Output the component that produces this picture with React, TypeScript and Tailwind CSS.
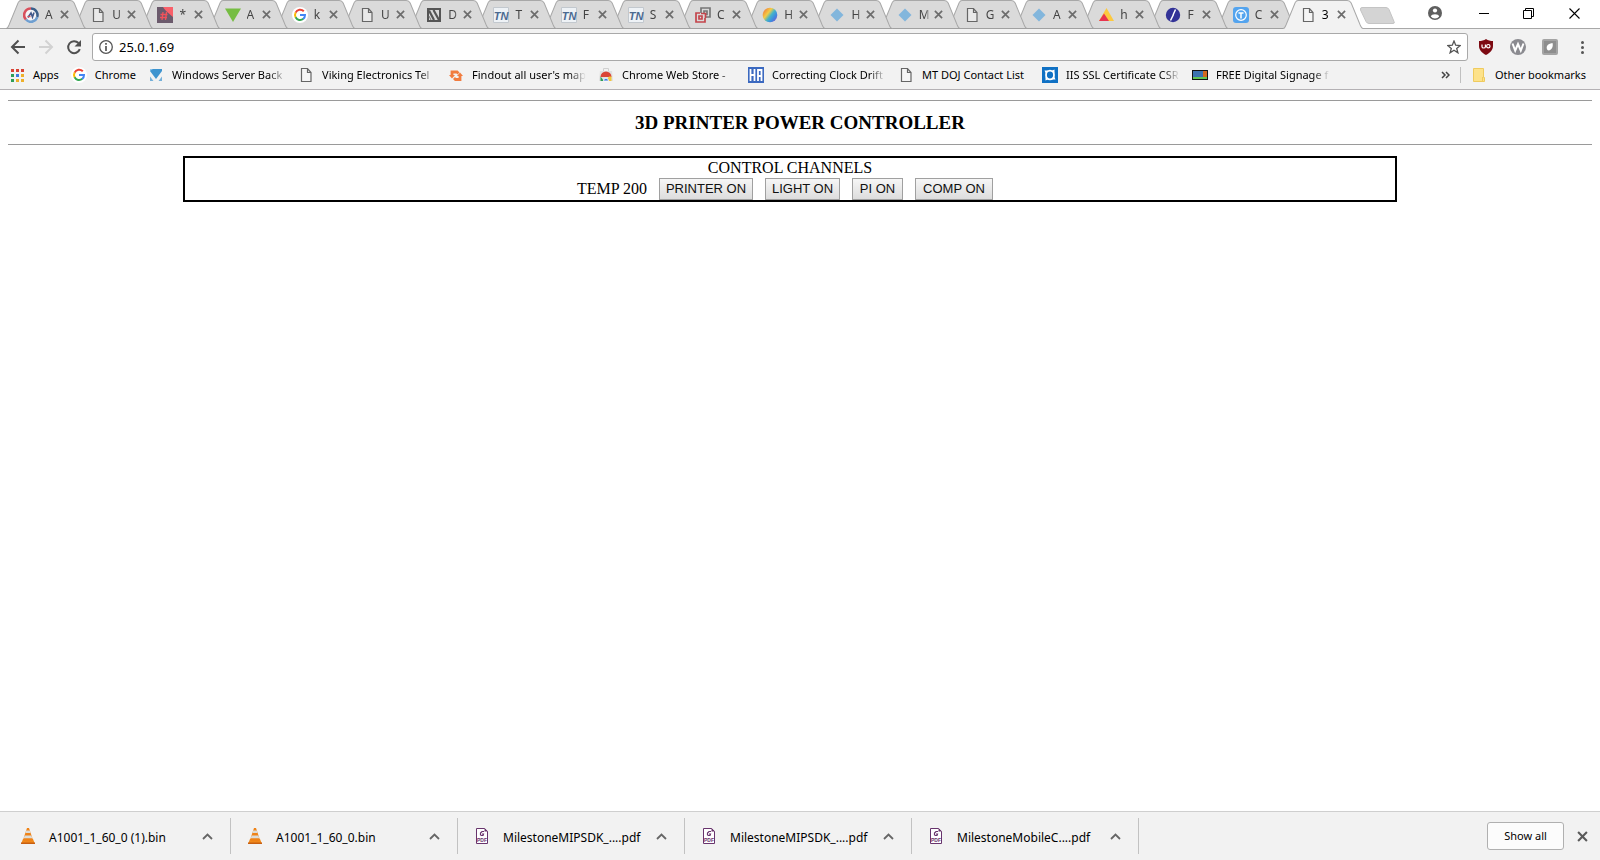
import type { ReactNode } from 'react'

type IconName =
  | 'ring'
  | 'page'
  | 'hash'
  | 'triangle'
  | 'google'
  | 'stripes'
  | 'tn'
  | 'squares'
  | 'rainbow'
  | 'diamond'
  | 'peaks'
  | 'slash'
  | 'circleT'
  | 'apps'
  | 'windows'
  | 'arrows'
  | 'store'
  | 'ha'
  | 'iis'
  | 'signage'
  | 'folder'
  | 'cone'
  | 'pdf'

interface Tab {
  icon: IconName
  title: string
}

interface LinkItem {
  icon: IconName
  label: string
  style?: string
}

const FADED = 'w-[114px] [mask-image:linear-gradient(to_right,black_85%,transparent)]'

const TABS: Tab[] = [
  { icon: 'ring', title: 'A' },
  { icon: 'page', title: 'U' },
  { icon: 'hash', title: '*' },
  { icon: 'triangle', title: 'A' },
  { icon: 'google', title: 'k' },
  { icon: 'page', title: 'U' },
  { icon: 'stripes', title: 'D' },
  { icon: 'tn', title: 'T' },
  { icon: 'tn', title: 'F' },
  { icon: 'tn', title: 'S' },
  { icon: 'squares', title: 'C' },
  { icon: 'rainbow', title: 'H' },
  { icon: 'diamond', title: 'H' },
  { icon: 'diamond', title: 'M' },
  { icon: 'page', title: 'G' },
  { icon: 'diamond', title: 'A' },
  { icon: 'peaks', title: 'h' },
  { icon: 'slash', title: 'F' },
  { icon: 'circleT', title: 'C' },
  { icon: 'page', title: '3' }
]

const BOOKMARKS: LinkItem[] = [
  { icon: 'apps', label: 'Apps' },
  { icon: 'google', label: 'Chrome' },
  { icon: 'windows', label: 'Windows Server Back', style: FADED },
  { icon: 'page', label: 'Viking Electronics Tel', style: FADED },
  { icon: 'arrows', label: "Findout all user's map", style: FADED },
  { icon: 'store', label: 'Chrome Web Store - ', style: FADED },
  { icon: 'ha', label: 'Correcting Clock Drift', style: FADED },
  { icon: 'page', label: 'MT DOJ Contact List', style: 'w-[108px]' },
  { icon: 'iis', label: 'IIS SSL Certificate CSR', style: FADED },
  { icon: 'signage', label: 'FREE Digital Signage f', style: FADED }
]

const DOWNLOADS: LinkItem[] = [
  { icon: 'cone', label: 'A1001_1_60_0 (1).bin' },
  { icon: 'cone', label: 'A1001_1_60_0.bin' },
  { icon: 'pdf', label: 'MilestoneMIPSDK_....pdf' },
  { icon: 'pdf', label: 'MilestoneMIPSDK_....pdf' },
  { icon: 'pdf', label: 'MilestoneMobileC....pdf' }
]

const CHANNELS = [
  { label: 'PRINTER ON', width: 'w-[94px]' },
  { label: 'LIGHT ON', width: 'w-[75px]' },
  { label: 'PI ON', width: 'w-[51px]' },
  { label: 'COMP ON', width: 'w-[78px]' }
]

const ICONS: Record<IconName, ReactNode> = {
  ring: (
    <>
      <circle cx="8" cy="8" r="8" fill="#f4f4f6" />
      <path d="M3 12.500A6.500 6.500 0 0 1 8 1.500" fill="none" stroke="#d8505c" strokeWidth="2.600" />
      <path d="M8 1.500a6.500 6.500 0 0 1 6.200 8.500" fill="none" stroke="#3c5f88" strokeWidth="2.600" />
      <path d="M14.200 10A6.500 6.500 0 0 1 3 12.500" fill="none" stroke="#6f9fd0" strokeWidth="2.600" />
      <path d="M5 10.500 8 6l1.500 4L11 5.500" fill="none" stroke="#41598a" strokeWidth="1.600" />
      <path d="M4.500 9.500h3" stroke="#d8505c" strokeWidth="1.400" />
    </>
  ),
  page: (
    <path
      d="M3.500 1.500h6l3.500 4v9H3.500zM9.500 1.500v4H13"
      fill="#f8f8f8"
      fillOpacity="0.5"
      stroke="#666"
      strokeWidth="1.200"
    />
  ),
  hash: (
    <>
      <path d="M0 0h16v16H0z" fill="#6b5a6c" />
      <path d="M6 0h10v10C13 7 9 5 6 0z" fill="#f9606a" />
      <path d="M6 5 5 13M9.500 5l-1 8M3.500 7.500h7M3 10.500h7" stroke="#f2525b" strokeWidth="1.300" fill="none" />
    </>
  ),
  triangle: <path d="M0 1.500h16L8 15z" fill="#76bd43" />,
  google: (
    <>
      <circle cx="8" cy="8" r="8" fill="#fff" />
      <path d="M11.800 4.300A5 5 0 0 0 3.600 5.700" fill="none" stroke="#ea4335" strokeWidth="2" />
      <path d="M3.700 5.500a5 5 0 0 0 0 5" fill="none" stroke="#fbbc05" strokeWidth="2" />
      <path d="M3.600 10.300a5 5 0 0 0 7.700 1.500" fill="none" stroke="#34a853" strokeWidth="2" />
      <path d="M11.200 11.900A5 5 0 0 0 13 8H8" fill="none" stroke="#4285f4" strokeWidth="2" />
    </>
  ),
  stripes: (
    <>
      <path d="M2 2h12v12H2z" fill="#dadada" stroke="#555" strokeWidth="2" />
      <path d="M3 3.500 8 13M7.500 3l5.500 10" stroke="#555" strokeWidth="2.200" fill="none" />
      <path d="M3 9l2 4" stroke="#777" strokeWidth="1" fill="none" />
    </>
  ),
  tn: (
    <>
      <path d="M.500.500h15v15H.500z" fill="#eef2f6" stroke="#c2c8ce" />
      <text x="8" y="13" textAnchor="middle" fontSize="11" fontWeight="700" fontStyle="italic" fontFamily="Liberation Sans, sans-serif" fill="#4c6a90">
        TN
      </text>
    </>
  ),
  squares: (
    <g fill="none" strokeWidth="1.700">
      <path d="M6 6V1h9v9h-4" stroke="#777" />
      <path d="M9 6V4h3v3.500h-2" stroke="#777" />
      <path d="M5 6H1v9h9v-4" stroke="#c4454c" />
      <path d="M4 9v3h3V9zM6 6.500h4.500V11" stroke="#c4454c" />
    </g>
  ),
  rainbow: (
    <>
      <defs>
        <linearGradient id="rainbow" x1="0" y1="0.1" x2="1" y2="0.9">
          <stop offset="0.1" stopColor="#f08a3c" />
          <stop offset="0.35" stopColor="#f5cc45" />
          <stop offset="0.55" stopColor="#45b4c8" />
          <stop offset="0.75" stopColor="#3d8be0" />
          <stop offset="0.95" stopColor="#7a5cc8" />
        </linearGradient>
      </defs>
      <circle cx="8" cy="8" r="7.300" fill="url(#rainbow)" />
    </>
  ),
  diamond: <path d="M8 1.500 14.500 8 8 14.500 1.500 8z" fill="#82b6dc" />,
  peaks: (
    <>
      <path d="M8.500 1 16 14H1z" fill="#fcc93f" />
      <path d="M6 6.500 11 14H1z" fill="#e8344f" />
    </>
  ),
  slash: (
    <>
      <circle cx="8" cy="8" r="7.200" fill="#333397" />
      <path d="M10.500 2.500 8 8M8.500 7.500 5.500 13.500" stroke="#fff" strokeWidth="1.500" />
    </>
  ),
  circleT: (
    <>
      <rect width="16" height="16" rx="3" fill="#54a4ee" />
      <circle cx="8" cy="8" r="5.300" fill="none" stroke="#fff" strokeWidth="1.200" />
      <path d="M5.500 6h5M8 6v5.500" stroke="#fff" strokeWidth="1.500" />
    </>
  ),
  apps: (
    <>
      <path d="M2 2h3v3H2zM7 2h3v3H7zM12 2h3v3h-3z" fill="#d94335" />
      <path d="M2 7h3v3H2zM2 12h3v3H2z" fill="#2f9e58" />
      <path d="M7 7h3v3H7z" fill="#3f7be0" />
      <path d="M12 7h3v3h-3zM12 12h3v3h-3zM7 12h3v3H7z" fill="#eeb02a" />
    </>
  ),
  windows: (
    <>
      <path d="M2 2h12v2L8 12 2 4z" fill="#3e94cf" />
      <path d="M2 9.500 5.500 14H2zM14 9.500 10.500 14H14z" fill="#3e94cf" fillOpacity="0.7" />
      <path d="M2 2h3l-3 2z" fill="#8cc4ea" />
    </>
  ),
  arrows: (
    <g fill="none" stroke="#f17c3f" strokeWidth="2.800">
      <path d="M4 9V5h5l1.500 1.500" />
      <path d="M12 8v4.500H7.500L6 11" />
      <path d="M1 8h6l-3 3.500zM9 9h6l-3-3.500z" fill="#f17c3f" stroke="none" />
    </g>
  ),
  store: (
    <>
      <path d="M2 4h12l1 10H1z" fill="#e0e0e0" />
      <path d="M5.500 4V1.500h5V4" fill="none" stroke="#d0d0d0" />
      <path d="M2.500 10a5.500 5.500 0 0 1 11 0z" fill="#da4436" />
      <path d="M2.500 9.500 6 14H2.500z" fill="#2f9e58" />
      <path d="M13.500 9.500V14H8l3-4.500z" fill="#f4c63a" />
      <path d="M5.500 14a2.500 2.800 0 0 1 5 0z" fill="#3f7be0" stroke="#fff" strokeWidth="0.800" />
    </>
  ),
  ha: (
    <>
      <path d="M0 0h16v16H0z" fill="#3b69c0" />
      <path d="M2.500 2v12M6.500 2v12M2.500 8h4M10 14V3h3.500v11M10 9h3.500" fill="none" stroke="#fff" strokeWidth="1.800" />
    </>
  ),
  iis: (
    <>
      <path d="M0 0h16v16H0z" fill="#1071c4" />
      <ellipse cx="8" cy="8" rx="4" ry="4.300" fill="none" stroke="#fff" strokeWidth="1.800" />
      <path d="M2.500 3.500h4L4 7zM13.500 12.500h-4L12 9zM12.500 2.500v4L9 4zM3.500 13.500v-4L7 12z" fill="#fff" />
    </>
  ),
  signage: (
    <>
      <path d="M0 3h16v10H0z" fill="#111" />
      <path d="M1 4h10v6H1z" fill="#3c72b0" />
      <path d="M11 4h4v6h-4z" fill="#d2691e" />
      <path d="M1 10h14v2H1z" fill="#62c554" />
    </>
  ),
  folder: (
    <>
      <path d="M2.500 1.500h10v9h1v4h-11z" fill="#fde28a" stroke="#efcb5e" />
      <path d="M11.500 14v-4" stroke="#efcb5e" />
    </>
  ),
  cone: (
    <>
      <path d="M3 11h10l2 5H1z" fill="#f08a1c" />
      <path d="M1 14.500h14V16H1z" fill="#c85f10" />
      <path d="M7 0h2l4 12c-2 2-8 2-10 0z" fill="#ef8318" />
      <path d="M6.200 2.500h3.600l.8 2.500H5.400zM4.600 7.500h6.800l.8 2.700H3.800z" fill="#dcdcd8" />
    </>
  ),
  pdf: (
    <>
      <path d="M2.500.500h8l3 3v12h-11z" fill="#fff" stroke="#68346d" />
      <path d="M10.500 0v3.500H14z" fill="#68346d" />
      <path d="M10 3.500H8L6.500 5v2l1 .500H9L9.500 6H8" fill="none" stroke="#68346d" strokeWidth="1.200" />
      <text x="8" y="14" textAnchor="middle" fontSize="5" fontWeight="700" fontFamily="Liberation Sans, sans-serif" fill="#68346d">
        PDF
      </text>
    </>
  )
}

function Icon({ name }: { name: IconName }) {
  return (
    <svg className="h-4 w-4 shrink-0" viewBox="0 0 16 16" aria-hidden="true">
      {ICONS[name]}
    </svg>
  )
}

function Cross({ className }: { className: string }) {
  return (
    <svg className={className} viewBox="0 0 10 10" aria-hidden="true">
      <path d="M1 1l8 8M9 1 1 9" fill="none" stroke="currentColor" strokeWidth="1.900" />
    </svg>
  )
}

function BrowserTab({ tab, active, zIndex }: { tab: Tab; active: boolean; zIndex: number }) {
  return (
    <div className="relative -mr-[13px] flex h-[29px] min-w-0 flex-1 items-center pl-[17px]" style={{ zIndex }}>
      <svg className="absolute inset-0 h-full w-full" viewBox="0 0 80 29" preserveAspectRatio="none" aria-hidden="true">
        <path
          d="M0 29V28.500C2 28.500 2 27 3 25L12 3C13 1 13 .500 15 .500H64C66 .500 67 1 68 3L77 25C78 27 78 28.500 80 28.500V29z"
          fill={active ? '#f2f2f2' : '#dadada'}
        />
        <path
          d="M0 28.500C2 28.500 2 27 3 25L12 3C13 1 13 .500 15 .500H64C66 .500 67 1 68 3L77 25C78 27 78 28.500 80 28.500"
          fill="none"
          stroke="#a8a8a8"
        />
        {!active && <path d="M0 28.500H80" stroke="#a0a0a0" />}
      </svg>
      <button type="button" className="relative flex items-center">
        <Icon name={tab.icon} />
        <span
          className={`ml-1.5 block w-[11px] text-left text-xs [mask-image:linear-gradient(to_right,black_60%,transparent)] ${
            active ? 'text-black' : 'text-[#444]'
          }`}
        >
          {tab.title}
        </span>
      </button>
      <button type="button" aria-label="Close tab" className="relative ml-1 text-[#6c6c6c]">
        <Cross className="h-[9px] w-[9px]" />
      </button>
    </div>
  )
}

function TabStrip() {
  return (
    <div className="flex h-[29px] border-b border-[#a8a8a8] bg-white pl-1.5">
      <div className="flex min-w-0 max-w-[1357px] flex-1 pr-[13px]">
        {TABS.map((tab, i) => {
          const active = i === TABS.length - 1
          return <BrowserTab key={i} tab={tab} active={active} zIndex={active ? 40 : TABS.length - i} />
        })}
      </div>
      <button type="button" aria-label="New tab" className="-ml-1 mt-1.5 h-[18px] w-9">
        <svg className="h-full w-full" viewBox="0 0 36 18" aria-hidden="true">
          <path d="M3 1.500h24q2 0 3 2l5 12q1 2-1 2H10q-2 0-3-2L1.500 4Q1 1.500 3 1.500z" fill="#d4d4d4" stroke="#c4c4c4" />
        </svg>
      </button>
      <div className="ml-auto flex h-[26px] items-center">
        <button type="button" aria-label="Profile" className="flex w-[49px] justify-center">
          <svg className="h-[14px] w-[14px]" viewBox="0 0 14 14" aria-hidden="true">
            <circle cx="7" cy="7" r="7" fill="#5f5f5f" />
            <circle cx="7" cy="4.500" r="2.100" fill="#fff" />
            <path d="M2.800 10.500a4.300 2.800 0 0 1 8.400 0 5.300 5.300 0 0 1-8.400 0z" fill="#fff" />
          </svg>
        </button>
        <button type="button" aria-label="Minimize" className="flex w-[49px] justify-center">
          <span className="h-px w-[10px] bg-black" />
        </button>
        <button type="button" aria-label="Restore" className="flex w-[41px] justify-center">
          <svg className="h-[11px] w-[11px]" viewBox="0 0 11 11" fill="none" stroke="#000" aria-hidden="true">
            <path d="M.500 2.500h8v8h-8zM2.500 2.500v-2h8v8h-2" />
          </svg>
        </button>
        <button type="button" aria-label="Close" className="flex w-[51px] justify-center">
          <svg className="h-[11px] w-[11px]" viewBox="0 0 11 11" stroke="#000" strokeWidth="1.100" aria-hidden="true">
            <path d="M.500.500l10 10M10.500.500l-10 10" />
          </svg>
        </button>
      </div>
    </div>
  )
}

function Toolbar() {
  return (
    <div className="flex h-9 items-center pl-2.5">
      <button type="button" aria-label="Back" className="text-[#505050]">
        <svg className="h-4 w-4" viewBox="0 0 16 16" fill="none" stroke="currentColor" strokeWidth="2" aria-hidden="true">
          <path d="M15 8H2.500M8.500 1.500 2 8l6.500 6.500" />
        </svg>
      </button>
      <button type="button" aria-label="Forward" disabled className="ml-3 text-[#d2d2d2]">
        <svg className="h-4 w-4" viewBox="0 0 16 16" fill="none" stroke="currentColor" strokeWidth="2" aria-hidden="true">
          <path d="M1 8h12.500M7.500 1.500 14 8l-6.500 6.500" />
        </svg>
      </button>
      <button type="button" aria-label="Reload" className="ml-3 text-[#505050]">
        <svg className="h-4 w-4" viewBox="0 0 16 16" aria-hidden="true">
          <path d="M13.800 10.200A6 6 0 1 1 12.500 4" fill="none" stroke="currentColor" strokeWidth="2" />
          <path d="M15 1v6.500H8.500z" fill="currentColor" />
        </svg>
      </button>
      <div className="ml-2.5 flex h-7 flex-1 items-center rounded-[3px] border border-[#a9a9a9] bg-white pr-1.5 pl-1.5">
        <svg className="h-[14px] w-[14px] shrink-0" viewBox="0 0 14 14" aria-hidden="true">
          <circle cx="7" cy="7" r="6.300" fill="none" stroke="#555" strokeWidth="1.300" />
          <path d="M7 3v1.700M7 6v5" stroke="#555" strokeWidth="1.700" />
        </svg>
        <input
          type="text"
          aria-label="Address"
          defaultValue="25.0.1.69"
          className="ml-1.5 min-w-0 flex-1 bg-transparent text-[13px] leading-5 text-black outline-none"
        />
        <button type="button" aria-label="Bookmark this page">
          <svg className="h-[14px] w-[14px]" viewBox="0 0 14 14" fill="none" stroke="#555" strokeWidth="1.300" aria-hidden="true">
            <path d="M7 1l1.700 4.200 4.500.300-3.500 2.900 1.200 4.400L7 10.300l-3.900 2.500 1.200-4.400L.800 5.500l4.500-.300z" />
          </svg>
        </button>
      </div>
      <div className="flex items-center gap-4 pr-2.5 pl-2.5">
        <button type="button" aria-label="uBlock Origin">
          <svg className="h-4 w-4" viewBox="0 0 16 16" aria-hidden="true">
            <path d="M8 0c2 1.500 4.500 2 7 2v5c0 4-3 7-7 9-4-2-7-5-7-9V2c2.500 0 5-.500 7-2z" fill="#7d0a12" />
            <path d="M4 5.500v2.200q0 1.300 1.700 1.300T7.400 7.700V5.500" fill="none" stroke="#fff" strokeWidth="1.200" />
            <circle cx="10.300" cy="7.200" r="1.700" fill="none" stroke="#fff" strokeWidth="1.200" />
          </svg>
        </button>
        <button type="button" aria-label="W extension">
          <svg className="h-4 w-4" viewBox="0 0 16 16" aria-hidden="true">
            <circle cx="8" cy="8" r="8" fill="#8b8b90" />
            <path d="M2.500 4.500 5.200 11.500 8 5l2.800 6.500L13.500 4.500" fill="none" stroke="#fff" strokeWidth="2" />
          </svg>
        </button>
        <button type="button" aria-label="Leaf extension">
          <svg className="h-4 w-4" viewBox="0 0 16 16" aria-hidden="true">
            <rect width="16" height="16" rx="2" fill="#a4a4a4" />
            <path d="M2 2h12v12H2z" fill="#8e8e8e" />
            <path d="M5.500 11C3.500 8 5 5 10.500 4c1 3-.500 7-4 7.500z" fill="#fff" />
          </svg>
        </button>
        <button type="button" aria-label="Menu" className="flex w-4 flex-col items-center gap-0.5">
          <span className="h-[3px] w-[3px] rounded-full bg-[#555]" />
          <span className="h-[3px] w-[3px] rounded-full bg-[#555]" />
          <span className="h-[3px] w-[3px] rounded-full bg-[#555]" />
        </button>
      </div>
    </div>
  )
}

function BookmarksBar() {
  return (
    <nav aria-label="Bookmarks" className="flex h-[25px] items-center border-b border-[#b4b1b4] pb-1 pl-[9px] text-[11px] text-black">
      {BOOKMARKS.map((bookmark) => (
        <a key={bookmark.label} href="#" className="flex shrink-0 items-center gap-2 pr-3">
          <Icon name={bookmark.icon} />
          <span className={`whitespace-nowrap ${bookmark.style ?? ''}`}>{bookmark.label}</span>
        </a>
      ))}
      <button type="button" aria-label="More bookmarks" className="ml-auto">
        <svg className="h-2 w-[9px]" viewBox="0 0 9 8" fill="none" stroke="#444" strokeWidth="1.500" aria-hidden="true">
          <path d="M1 1l3 3-3 3M5 1l3 3-3 3" />
        </svg>
      </button>
      <span className="ml-2.5 h-4 w-px bg-[#c0c0c0]" />
      <button type="button" className="ml-2.5 flex items-center gap-2 pr-[14px]">
        <Icon name="folder" />
        Other bookmarks
      </button>
    </nav>
  )
}

function ControllerPage() {
  return (
    <main className="flex-1 bg-white px-2 pt-2.5 font-['Liberation_Serif','Times_New_Roman',serif] text-base text-black">
      <hr className="border-t border-[#9a9a9a]" />
      <h1 className="py-2.5 text-center text-[19px] leading-[23px] font-bold">3D PRINTER POWER CONTROLLER</h1>
      <hr className="border-t border-[#9a9a9a]" />
      <section className="mt-[11px] mr-[195px] ml-[175px] border-2 border-black">
        <h2 className="text-center leading-5">CONTROL CHANNELS</h2>
        <div className="flex items-center justify-center gap-3 pr-2.5 leading-5">
          <span>TEMP 200</span>
          {CHANNELS.map((channel) => (
            <button
              key={channel.label}
              type="button"
              className={`h-[22px] border border-[#a0a0a0] bg-linear-to-b from-[#f6f6f6] to-[#dddddd] font-['Liberation_Sans',Arial,sans-serif] text-[13px] leading-5 whitespace-nowrap text-[#111] ${channel.width}`}
            >
              {channel.label}
            </button>
          ))}
        </div>
      </section>
    </main>
  )
}

function DownloadsBar() {
  return (
    <footer className="flex h-[49px] items-center border-t border-[#cfcfcf] bg-[#f2f2f2] pl-1">
      {DOWNLOADS.map((download, i) => (
        <div key={i} className="flex h-9 w-[227px] items-center border-r border-[#c2c2c2] pr-[17px] pl-4">
          <Icon name={download.icon} />
          <a href="#" className="ml-[13px] pt-1 text-xs whitespace-nowrap text-black">
            {download.label}
          </a>
          <button type="button" aria-label="Download options" className="ml-auto">
            <svg className="h-[7px] w-[11px]" viewBox="0 0 11 7" fill="none" stroke="#666" strokeWidth="1.800" aria-hidden="true">
              <path d="M1 6l4.500-4.500L10 6" />
            </svg>
          </button>
        </div>
      ))}
      <button
        type="button"
        className="ml-auto h-7 w-[77px] rounded-[3px] border border-[#b0b0b0] bg-[#fcfcfc] text-[11px] text-black"
      >
        Show all
      </button>
      <button type="button" aria-label="Close downloads" className="mr-3 ml-[13px] text-[#5a5a5a]">
        <Cross className="h-[11px] w-[11px]" />
      </button>
    </footer>
  )
}

export default function App() {
  return (
    <div className="flex min-h-screen flex-col overflow-x-hidden bg-[#f2f2f2] font-['Noto_Sans','Open_Sans',sans-serif]">
      <header>
        <TabStrip />
        <Toolbar />
        <BookmarksBar />
      </header>
      <ControllerPage />
      <DownloadsBar />
    </div>
  )
}
